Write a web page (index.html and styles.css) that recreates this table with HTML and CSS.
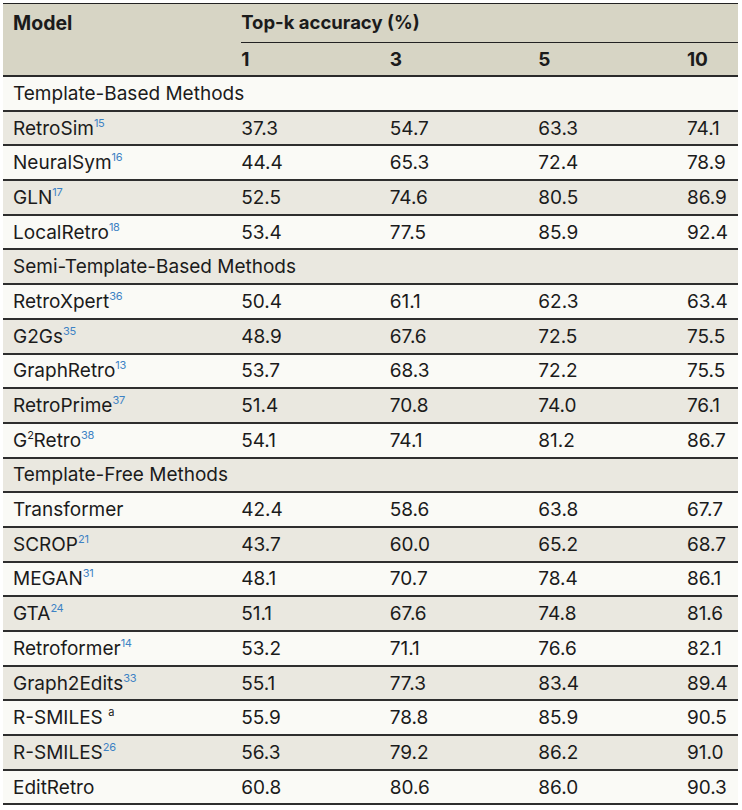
FILE: index.html
```html
<!DOCTYPE html>
<html>
<head>
<meta charset="utf-8">
<link rel="stylesheet" href="styles.css">
</head>
<body>
<table class="results">
  <colgroup>
    <col class="c-model"><col class="c-num"><col class="c-num"><col class="c-num"><col class="c-last">
  </colgroup>
  <thead>
    <tr class="h1">
      <th class="model">Model</th>
      <th colspan="4" class="topk"><div class="topk-inner">Top-k accuracy (%)</div></th>
    </tr>
    <tr class="h2">
      <th></th><th>1</th><th>3</th><th>5</th><th>10</th>
    </tr>
  </thead>
  <tbody>
    <tr class="sec"><td colspan="5">Template-Based Methods</td></tr>
    <tr><td>RetroSim<sup>15</sup></td><td>37.3</td><td>54.7</td><td>63.3</td><td>74.1</td></tr>
    <tr><td>NeuralSym<sup>16</sup></td><td>44.4</td><td>65.3</td><td>72.4</td><td>78.9</td></tr>
    <tr><td>GLN<sup>17</sup></td><td>52.5</td><td>74.6</td><td>80.5</td><td>86.9</td></tr>
    <tr><td>LocalRetro<sup>18</sup></td><td>53.4</td><td>77.5</td><td>85.9</td><td>92.4</td></tr>
    <tr class="sec"><td colspan="5">Semi-Template-Based Methods</td></tr>
    <tr><td>RetroXpert<sup>36</sup></td><td>50.4</td><td>61.1</td><td>62.3</td><td>63.4</td></tr>
    <tr><td>G2Gs<sup>35</sup></td><td>48.9</td><td>67.6</td><td>72.5</td><td>75.5</td></tr>
    <tr><td>GraphRetro<sup>13</sup></td><td>53.7</td><td>68.3</td><td>72.2</td><td>75.5</td></tr>
    <tr><td>RetroPrime<sup>37</sup></td><td>51.4</td><td>70.8</td><td>74.0</td><td>76.1</td></tr>
    <tr><td>G<sup class="plain">2</sup>Retro<sup>38</sup></td><td>54.1</td><td>74.1</td><td>81.2</td><td>86.7</td></tr>
    <tr class="sec"><td colspan="5">Template-Free Methods</td></tr>
    <tr><td>Transformer</td><td>42.4</td><td>58.6</td><td>63.8</td><td>67.7</td></tr>
    <tr><td>SCROP<sup>21</sup></td><td>43.7</td><td>60.0</td><td>65.2</td><td>68.7</td></tr>
    <tr><td>MEGAN<sup>31</sup></td><td>48.1</td><td>70.7</td><td>78.4</td><td>86.1</td></tr>
    <tr><td>GTA<sup>24</sup></td><td>51.1</td><td>67.6</td><td>74.8</td><td>81.6</td></tr>
    <tr><td>Retroformer<sup>14</sup></td><td>53.2</td><td>71.1</td><td>76.6</td><td>82.1</td></tr>
    <tr><td>Graph2Edits<sup>33</sup></td><td>55.1</td><td>77.3</td><td>83.4</td><td>89.4</td></tr>
    <tr><td>R-SMILES <sup class="plain">a</sup></td><td>55.9</td><td>78.8</td><td>85.9</td><td>90.5</td></tr>
    <tr><td>R-SMILES<sup>26</sup></td><td>56.3</td><td>79.2</td><td>86.2</td><td>91.0</td></tr>
    <tr><td>EditRetro</td><td>60.8</td><td>80.6</td><td>86.0</td><td>90.3</td></tr>
  </tbody>
</table>
</body>
</html>
```
FILE: styles.css
```css
html, body {
  margin: 0;
  padding: 0;
  background: #ffffff;
}
body {
  padding: 3px 4px 0 3px;
  font-family: "Inter", "Liberation Sans", sans-serif;
  color: #1b1b1b;
}
.results {
  width: 735px;
  border-collapse: collapse;
  table-layout: fixed;
  font-size: 19px;
}
.c-model { width: 228px; }
.c-num { width: 148.5px; }
.c-last { width: 61px; }
.results thead {
  background: #d7d5c5;
}
.results thead tr.h1 th {
  border-top: 1px solid #222;
  height: 39px;
  padding: 0 0 0 10px;
  vertical-align: top;
  padding-top: 7px;
  box-sizing: border-box;
}
.results th {
  text-align: left;
  font-weight: 700;
  font-size: 18.5px;
}
.results th.model {
  font-size: 19.5px;
}
.results th.topk {
  padding-left: 0 !important;
  padding-right: 0;
}
.topk-inner {
  margin-left: 10px;
  padding-bottom: 9px;
  border-bottom: 1.5px solid #222;
}
.results thead tr.h1 th.topk {
  padding-bottom: 0;
}
.results thead tr.h2 th {
  height: 32px;
  padding: 0 0 0 10px;
  border-bottom: 2px solid #2a2a2a;
  font-size: 19px;
}
.results tbody td {
  height: 32.7px;
  padding: 0 0 0 10px;
  border-bottom: 2px solid #2e2e2e;
  white-space: nowrap;
  vertical-align: middle;
  line-height: 1;
}
.results tbody tr:nth-child(odd) { background: #fafaf6; }
.results tbody tr:nth-child(even) { background: #eae8e0; }
.results sup {
  font-size: 11px;
  color: #3d82c4;
  vertical-align: 0;
  position: relative;
  top: -8px;
  margin-left: 0;
  letter-spacing: -0.3px;
}
.results sup.plain {
  color: #1b1b1b;
}
```
